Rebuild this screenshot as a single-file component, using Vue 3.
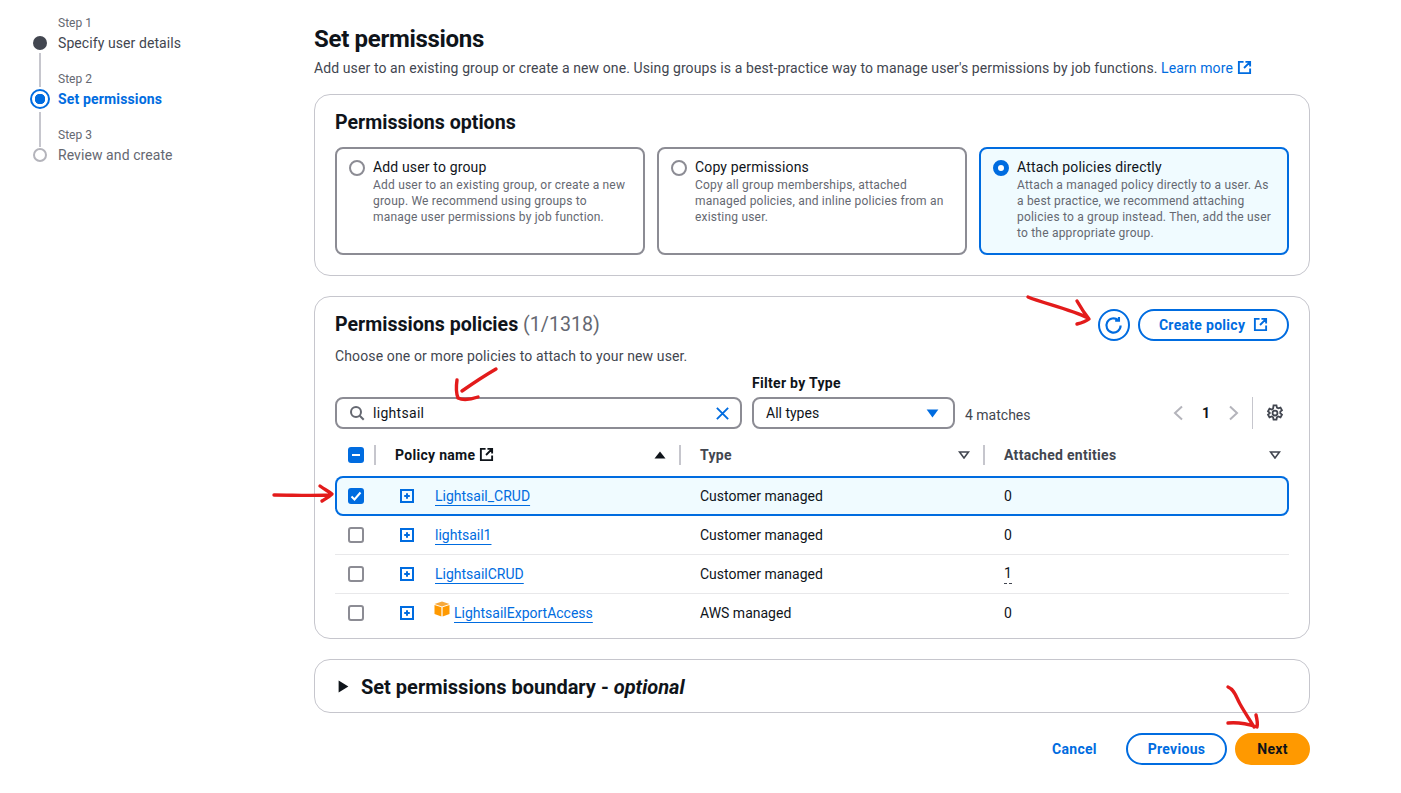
<script setup>
const steps = [
  { label: 'Step 1', title: 'Specify user details', state: 'done' },
  { label: 'Step 2', title: 'Set permissions', state: 'current' },
  { label: 'Step 3', title: 'Review and create', state: 'todo' },
]

const options = [
  {
    title: 'Add user to group',
    lines: ['Add user to an existing group, or create a new', 'group. We recommend using groups to', 'manage user permissions by job function.'],
  },
  {
    title: 'Copy permissions',
    lines: ['Copy all group memberships, attached', 'managed policies, and inline policies from an', 'existing user.'],
  },
  {
    title: 'Attach policies directly',
    lines: ['Attach a managed policy directly to a user. As', 'a best practice, we recommend attaching', 'policies to a group instead. Then, add the user', 'to the appropriate group.'],
    active: true,
  },
]

const policies = [
  { name: 'Lightsail_CRUD', type: 'Customer managed', count: '0', selected: true },
  { name: 'lightsail1', type: 'Customer managed', count: '0' },
  { name: 'LightsailCRUD', type: 'Customer managed', count: '1', linked: true },
  { name: 'LightsailExportAccess', type: 'AWS managed', count: '0', aws: true },
]
</script>

<template>
  <div class="page">
    <aside class="sidebar">
      <ol class="steps">
        <li v-for="s in steps" :key="s.label" :class="['step', s.state]">
          <small>{{ s.label }}</small>
          <span class="dot"></span>
          <span class="step-title">{{ s.title }}</span>
        </li>
      </ol>
    </aside>

    <main class="main">
      <header class="head">
        <h1>Set permissions</h1>
        <p>
          Add user to an existing group or create a new one. Using groups is a best-practice way to manage user's permissions by job functions.
          <a class="learn">Learn more
            <svg class="ext" viewBox="0 0 16 16"><path d="M14 9v5H2V2h5M9 2h5v5M14 2 7.5 8.5" /></svg>
          </a>
        </p>
      </header>

      <section class="card options-card">
        <h2>Permissions options</h2>
        <div class="tiles">
          <div v-for="o in options" :key="o.title" :class="['tile', { active: o.active }]">
            <span class="radio"></span>
            <div class="tile-body">
              <div class="tile-title">{{ o.title }}</div>
              <div v-for="l in o.lines" :key="l" class="tile-line">{{ l }}</div>
            </div>
          </div>
        </div>
      </section>

      <section class="card policies-card">
        <div class="policies-head">
          <h2>Permissions policies <span class="count">(1/1318)</span></h2>
          <div class="head-actions">
            <button class="btn icon-btn" aria-label="Refresh">
              <svg viewBox="0 0 16 16"><path d="M14 8A6 6 0 1 1 11.9 3.4M12.6 .8V4H9.4" /></svg>
            </button>
            <button class="btn create">Create policy
              <svg class="ext" viewBox="0 0 16 16"><path d="M14 9v5H2V2h5M9 2h5v5M14 2 7.5 8.5" /></svg>
            </button>
          </div>
        </div>
        <p class="policies-sub">Choose one or more policies to attach to your new user.</p>

        <div class="filters">
          <div class="search">
            <svg class="search-icon" viewBox="0 0 16 16"><circle cx="7" cy="7" r="5" /><path d="m10.7 10.7 4 4" /></svg>
            <span class="search-text">lightsail</span>
            <svg class="clear" viewBox="0 0 16 16"><path d="m2 2 12 12M14 2 2 14" /></svg>
          </div>
          <div class="type-filter">
            <label>Filter by Type</label>
            <div class="select">
              <span>All types</span>
              <svg class="caret" viewBox="0 0 14 10"><path d="M0.5 0.5h13L7 9.5z" /></svg>
            </div>
          </div>
          <span class="matches">4 matches</span>
          <div class="pager">
            <svg class="chev" viewBox="0 0 10 16"><path d="M9 1.5 2 8l7 6.5" /></svg>
            <b>1</b>
            <svg class="chev" viewBox="0 0 10 16"><path d="m1 1.5 7 6.5-7 6.5" /></svg>
            <span class="pager-sep"></span>
            <svg class="gear" viewBox="0 0 16 16">
              <circle cx="8" cy="8" r="2.2" />
              <path d="M6.7 1.2h2.6l.4 2 1.3.7 1.9-.7 1.3 2.3-1.5 1.3v1.4l1.5 1.3-1.3 2.3-1.9-.7-1.3.7-.4 2H6.7l-.4-2-1.3-.7-1.9.7-1.3-2.3 1.5-1.3V7.8L1.8 6.5l1.3-2.3 1.9.7 1.3-.7z" />
            </svg>
          </div>
        </div>

        <div class="table">
          <div class="row head-row">
            <div class="cell check-cell">
              <span class="check on">
                <svg viewBox="0 0 16 16"><path d="M4 8h8" /></svg>
              </span>
            </div>
            <div class="cell th name-th">
              <span class="th-name">Policy name
                <svg class="ext dark" viewBox="0 0 16 16"><path d="M14 9v5H2V2h5M9 2h5v5M14 2 7.5 8.5" /></svg>
              </span>
              <svg class="sort solid" viewBox="0 0 12 8"><path d="M6 0.5 11.5 7.5H0.5z" /></svg>
            </div>
            <div class="cell th type-th">
              <span>Type</span>
              <svg class="sort" viewBox="0 0 12 8"><path d="M1.5 1h9L6 7z" /></svg>
            </div>
            <div class="cell th">
              <span>Attached entities</span>
              <svg class="sort" viewBox="0 0 12 8"><path d="M1.5 1h9L6 7z" /></svg>
            </div>
          </div>

          <div v-for="p in policies" :key="p.name" :class="['row', 'body-row', { selected: p.selected }]">
            <div class="cell check-cell">
              <span :class="['check', { on: p.selected }]">
                <svg v-if="p.selected" viewBox="0 0 16 16"><path d="m3.5 8.5 3 3 6-7" /></svg>
              </span>
            </div>
            <div class="cell name-cell">
              <svg class="expand" viewBox="0 0 14 14">
                <rect x="1" y="1" width="12" height="12" />
                <path d="M7 4.2v5.6M4.2 7h5.6" />
              </svg>
              <svg v-if="p.aws" class="cube" viewBox="0 0 16 16">
                <path d="M8 0.5 15.5 3 8 5.5 0.5 3z" fill="#f7a83a" />
                <path d="M0.5 4 7.4 6.3V15.5L0.5 13z" fill="#f90" />
                <path d="M15.5 4 8.6 6.3V15.5L15.5 13z" fill="#f90" />
              </svg>
              <a class="policy-link">{{ p.name }}</a>
            </div>
            <div class="cell">{{ p.type }}</div>
            <div class="cell"><span :class="{ dotted: p.linked }">{{ p.count }}</span></div>
          </div>
        </div>
      </section>

      <section class="card boundary-card">
        <svg class="tri" viewBox="0 0 10 12"><path d="M0.5 0.5 9.5 6 0.5 11.5z" /></svg>
        <h2>Set permissions boundary - <em>optional</em></h2>
      </section>

      <footer class="actions">
        <button class="btn plain">Cancel</button>
        <button class="btn prev">Previous</button>
        <button class="btn next">Next</button>
      </footer>
    </main>

    <!-- hand drawn annotations on top of the screenshot -->
    <svg class="marks" viewBox="0 0 1401 793">
      <path d="M1028 297C1042 303 1070 309 1088 318M1077 301C1081 308 1085 314 1089 319C1085 322 1081 323 1077 324" />
      <path d="M496 369C484 376 472 384 462 391M457 380C456 387 456 393 458 398C464 401 472 399 478 397" />
      <path d="M274 495C292 495 312 496 329 495M320 486C324 489 328 491 332 494C329 497 325 499 322 501" />
      <path d="M1228 687C1235 690 1236 697 1240 704C1245 713 1250 720 1254 727M1228 723C1238 722 1248 724 1257 727C1258 723 1257 719 1256 715" />
    </svg>
  </div>
</template>

<style>
html, body { background: #fff; }
</style>

<style scoped>
* { box-sizing: border-box; }
.page {
  position: relative;
  width: 1401px;
  height: 793px;
  display: flex;
  overflow: hidden;
  font: 400 14px/20px Roboto, "Noto Sans", sans-serif;
  color: #0f141a;
  background: #fff;
}
h1, h2, p, ol { margin: 0; padding: 0; }

.sidebar { width: 314px; flex: none; padding: 14px 0 0 30px; }
.steps { list-style: none; }
.step {
  position: relative;
  display: grid;
  grid-template-columns: 20px 1fr;
  grid-template-rows: 19px 20px;
  align-content: start;
  column-gap: 8px;
  height: 56px;
  color: #424650;
}
.step small { grid-column: 2; font-size: 12px; line-height: 18px; color: #656871; }
.step .dot {
  grid-column: 1;
  grid-row: 2;
  justify-self: center;
  align-self: center;
  width: 14px;
  height: 14px;
  border-radius: 50%;
  background: #424650;
}
.step-title { grid-column: 2; grid-row: 2; letter-spacing: .08px; }
.step::after {
  content: "";
  position: absolute;
  left: 9px;
  top: 39px;
  height: 34px;
  width: 2px;
  background: #c6c6cd;
}
.step:last-child::after { display: none; }
.step.current .step-title { color: #006ce0; font-weight: 700; letter-spacing: .15px; }
.step.current .dot {
  width: 20px;
  height: 20px;
  border: 2px solid #006ce0;
  background: radial-gradient(circle, #006ce0 0 5px, #fff 5.5px);
}
.step.current::after { top: 42px; height: 35px; }
.step.todo { color: #656871; }
.step.todo .dot { background: #fff; border: 2px solid #b4b4bb; }

.main { width: 996px; flex: none; padding-top: 24px; }
.head h1 { font-size: 24px; line-height: 30px; font-weight: 700; letter-spacing: -.3px; }
.head p { margin-top: 4px; font-size: 14px; line-height: 20px; color: #424650; white-space: nowrap; letter-spacing: .1px; }
.learn { color: #006ce0; }
.ext { width: 15px; height: 15px; margin-left: 0; vertical-align: -2px; fill: none; stroke: #006ce0; stroke-width: 2; }
.ext.dark { stroke: #0f141a; }

.card {
  border: 1px solid #c6c6cd;
  border-radius: 16px;
  background: #fff;
}
.card h2 { font-size: 19.6px; line-height: 24px; font-weight: 700; }

.options-card { margin-top: 16px; height: 182px; padding: 16px 20px 0; }
.tiles { display: grid; grid-template-columns: repeat(3, 310px); column-gap: 12px; margin-top: 12px; }
.tile {
  height: 108px;
  display: flex;
  gap: 8px;
  padding: 9px 12px;
  border: 2px solid #8c8c94;
  border-radius: 8px;
}
.tile.active { border-color: #006ce0; background: #f0fbff; }
.radio {
  flex: none;
  width: 16px;
  height: 16px;
  margin-top: 2px;
  border: 2px solid #8c8c94;
  border-radius: 50%;
  background: #fff;
}
.tile.active .radio { border: 5px solid #006ce0; }
.tile-title { line-height: 19px; letter-spacing: .15px; }
.tile-line { font-size: 12px; line-height: 16px; color: #656871; white-space: nowrap; letter-spacing: .2px; }

.policies-card { margin-top: 20px; height: 343px; padding: 12px 20px 0; }
.policies-head { display: flex; justify-content: space-between; align-items: flex-start; height: 32px; }
.policies-head h2 { padding-top: 4px; }
.count { font-weight: 400; color: #656871; }
.head-actions { display: flex; gap: 8px; }
.btn {
  font: 700 14px/20px Roboto, "Noto Sans", sans-serif;
  letter-spacing: .3px;
  border-radius: 20px;
  background: #fff;
  color: #006ce0;
  border: 2px solid #006ce0;
  padding: 0;
  height: 32px;
}
.icon-btn { width: 32px; display: flex; align-items: center; justify-content: center; }
.icon-btn svg { width: 19px; height: 19px; margin-right: 1px; fill: none; stroke: #006ce0; stroke-width: 1.8; }
.create { width: 151px; }
.create .ext { margin-left: 4px; }
.policies-sub { margin-top: 5px; color: #424650; font-size: 14px; letter-spacing: .13px; }

.filters { display: flex; align-items: flex-end; margin-top: 17px; height: 46px; }
.search {
  width: 407px;
  height: 32px;
  display: flex;
  align-items: center;
  padding: 0 10px 0 12px;
  border: 2px solid #8c8c94;
  border-radius: 8px;
}
.search-icon { width: 16px; height: 16px; fill: none; stroke: #656871; stroke-width: 2; }
.search-text { margin-left: 8px; flex: 1; letter-spacing: .3px; }
.clear { width: 15px; height: 15px; fill: none; stroke: #006ce0; stroke-width: 2; }
.type-filter { margin-left: 10px; width: 203px; }
.type-filter label { display: block; font-weight: 700; line-height: 16px; margin-bottom: 6px; font-size: 14px; letter-spacing: .3px; }
.select {
  height: 32px;
  display: flex;
  align-items: center;
  justify-content: space-between;
  padding: 0 14px 0 12px;
  border: 2px solid #8c8c94;
  border-radius: 8px;
}
.caret { width: 13px; height: 9px; fill: #006ce0; }
.matches { margin-left: 10px; line-height: 28px; color: #424650; }
.pager { margin-left: auto; width: 116px; height: 32px; display: flex; align-items: center; }
.chev { width: 10px; height: 16px; fill: none; stroke: #b4b4bb; stroke-width: 2; }
.pager b { width: 46px; text-align: center; font-size: 14px; }
.pager-sep { width: 1px; height: 32px; margin-left: 13px; background: #c6c6cd; }
.gear { width: 18px; height: 18px; margin-left: 13px; fill: none; stroke: #424650; stroke-width: 1.6; }

.table { margin-top: 7px; }
.row { display: grid; grid-template-columns: 40px 305px 304px 305px; align-items: center; }
.head-row { height: 40px; padding-bottom: 2px; grid-template-columns: 39px 305px 304px 306px; }
.body-row { height: 39px; padding-bottom: 2px; box-shadow: inset 0 -1px 0 #e8e8ea; }
.body-row:last-child { box-shadow: none; }
.body-row.selected { height: 40px; padding-bottom: 0; border-radius: 8px; background: #f0fbff; box-shadow: inset 0 0 0 2px #006ce0; }
.cell { padding-left: 20px; color: #0f141a; display: flex; align-items: center; white-space: nowrap; }
.check-cell { padding-left: 13px; }
.check {
  width: 16px;
  height: 16px;
  border: 2px solid #8c8c94;
  border-radius: 3px;
  background: #fff;
  display: block;
}
.selected .check { margin-top: -1px; }
.check.on { border: 0; background: #006ce0; }
.check svg { display: block; width: 16px; height: 16px; fill: none; stroke: #fff; stroke-width: 2; }
.th { justify-content: space-between; font-weight: 700; color: #424650; padding-right: 8px; height: 20px; border-left: 2px solid #c6c6cd; padding-left: 19px; letter-spacing: .3px; }
.name-th { padding-right: 13px; }
.type-th { padding-right: 13px; }
.th-name { color: #0f141a; }
.sort { width: 12px; height: 8px; fill: none; stroke: #424650; stroke-width: 1.6; }
.sort.solid { fill: #0f141a; stroke: none; }
.name-cell { padding-left: 25px; }
.expand { width: 14px; height: 14px; fill: none; stroke: #006ce0; stroke-width: 2; margin-right: 21px; }
.cube { width: 16px; height: 16px; margin: -8px 4px 0 -1px; }
.policy-link { color: #006ce0; text-decoration: underline; text-decoration-thickness: 1px; text-underline-offset: 4px; }
.dotted { border-bottom: 1px dashed #424650; }

.boundary-card { margin-top: 20px; height: 54px; display: flex; align-items: center; gap: 12px; padding-left: 23px; }
.tri { width: 11px; height: 13px; fill: #0f141a; }
.boundary-card h2 { padding-top: 2px; font-size: 20px; }
.boundary-card em { font-style: italic; }

.actions { display: flex; justify-content: flex-end; align-items: center; margin-top: 20px; }
.plain { border: 0; width: 44px; margin-right: 30px; background: none; }
.prev { width: 101px; margin-right: 8px; }
.next { width: 75px; background: #ff9900; border-color: #ff9900; color: #0f141a; }

.marks { position: absolute; inset: 0; width: 1401px; height: 793px; pointer-events: none; fill: none; stroke: #e31b1b; stroke-width: 3.4; stroke-linecap: round; stroke-linejoin: round; }
</style>
